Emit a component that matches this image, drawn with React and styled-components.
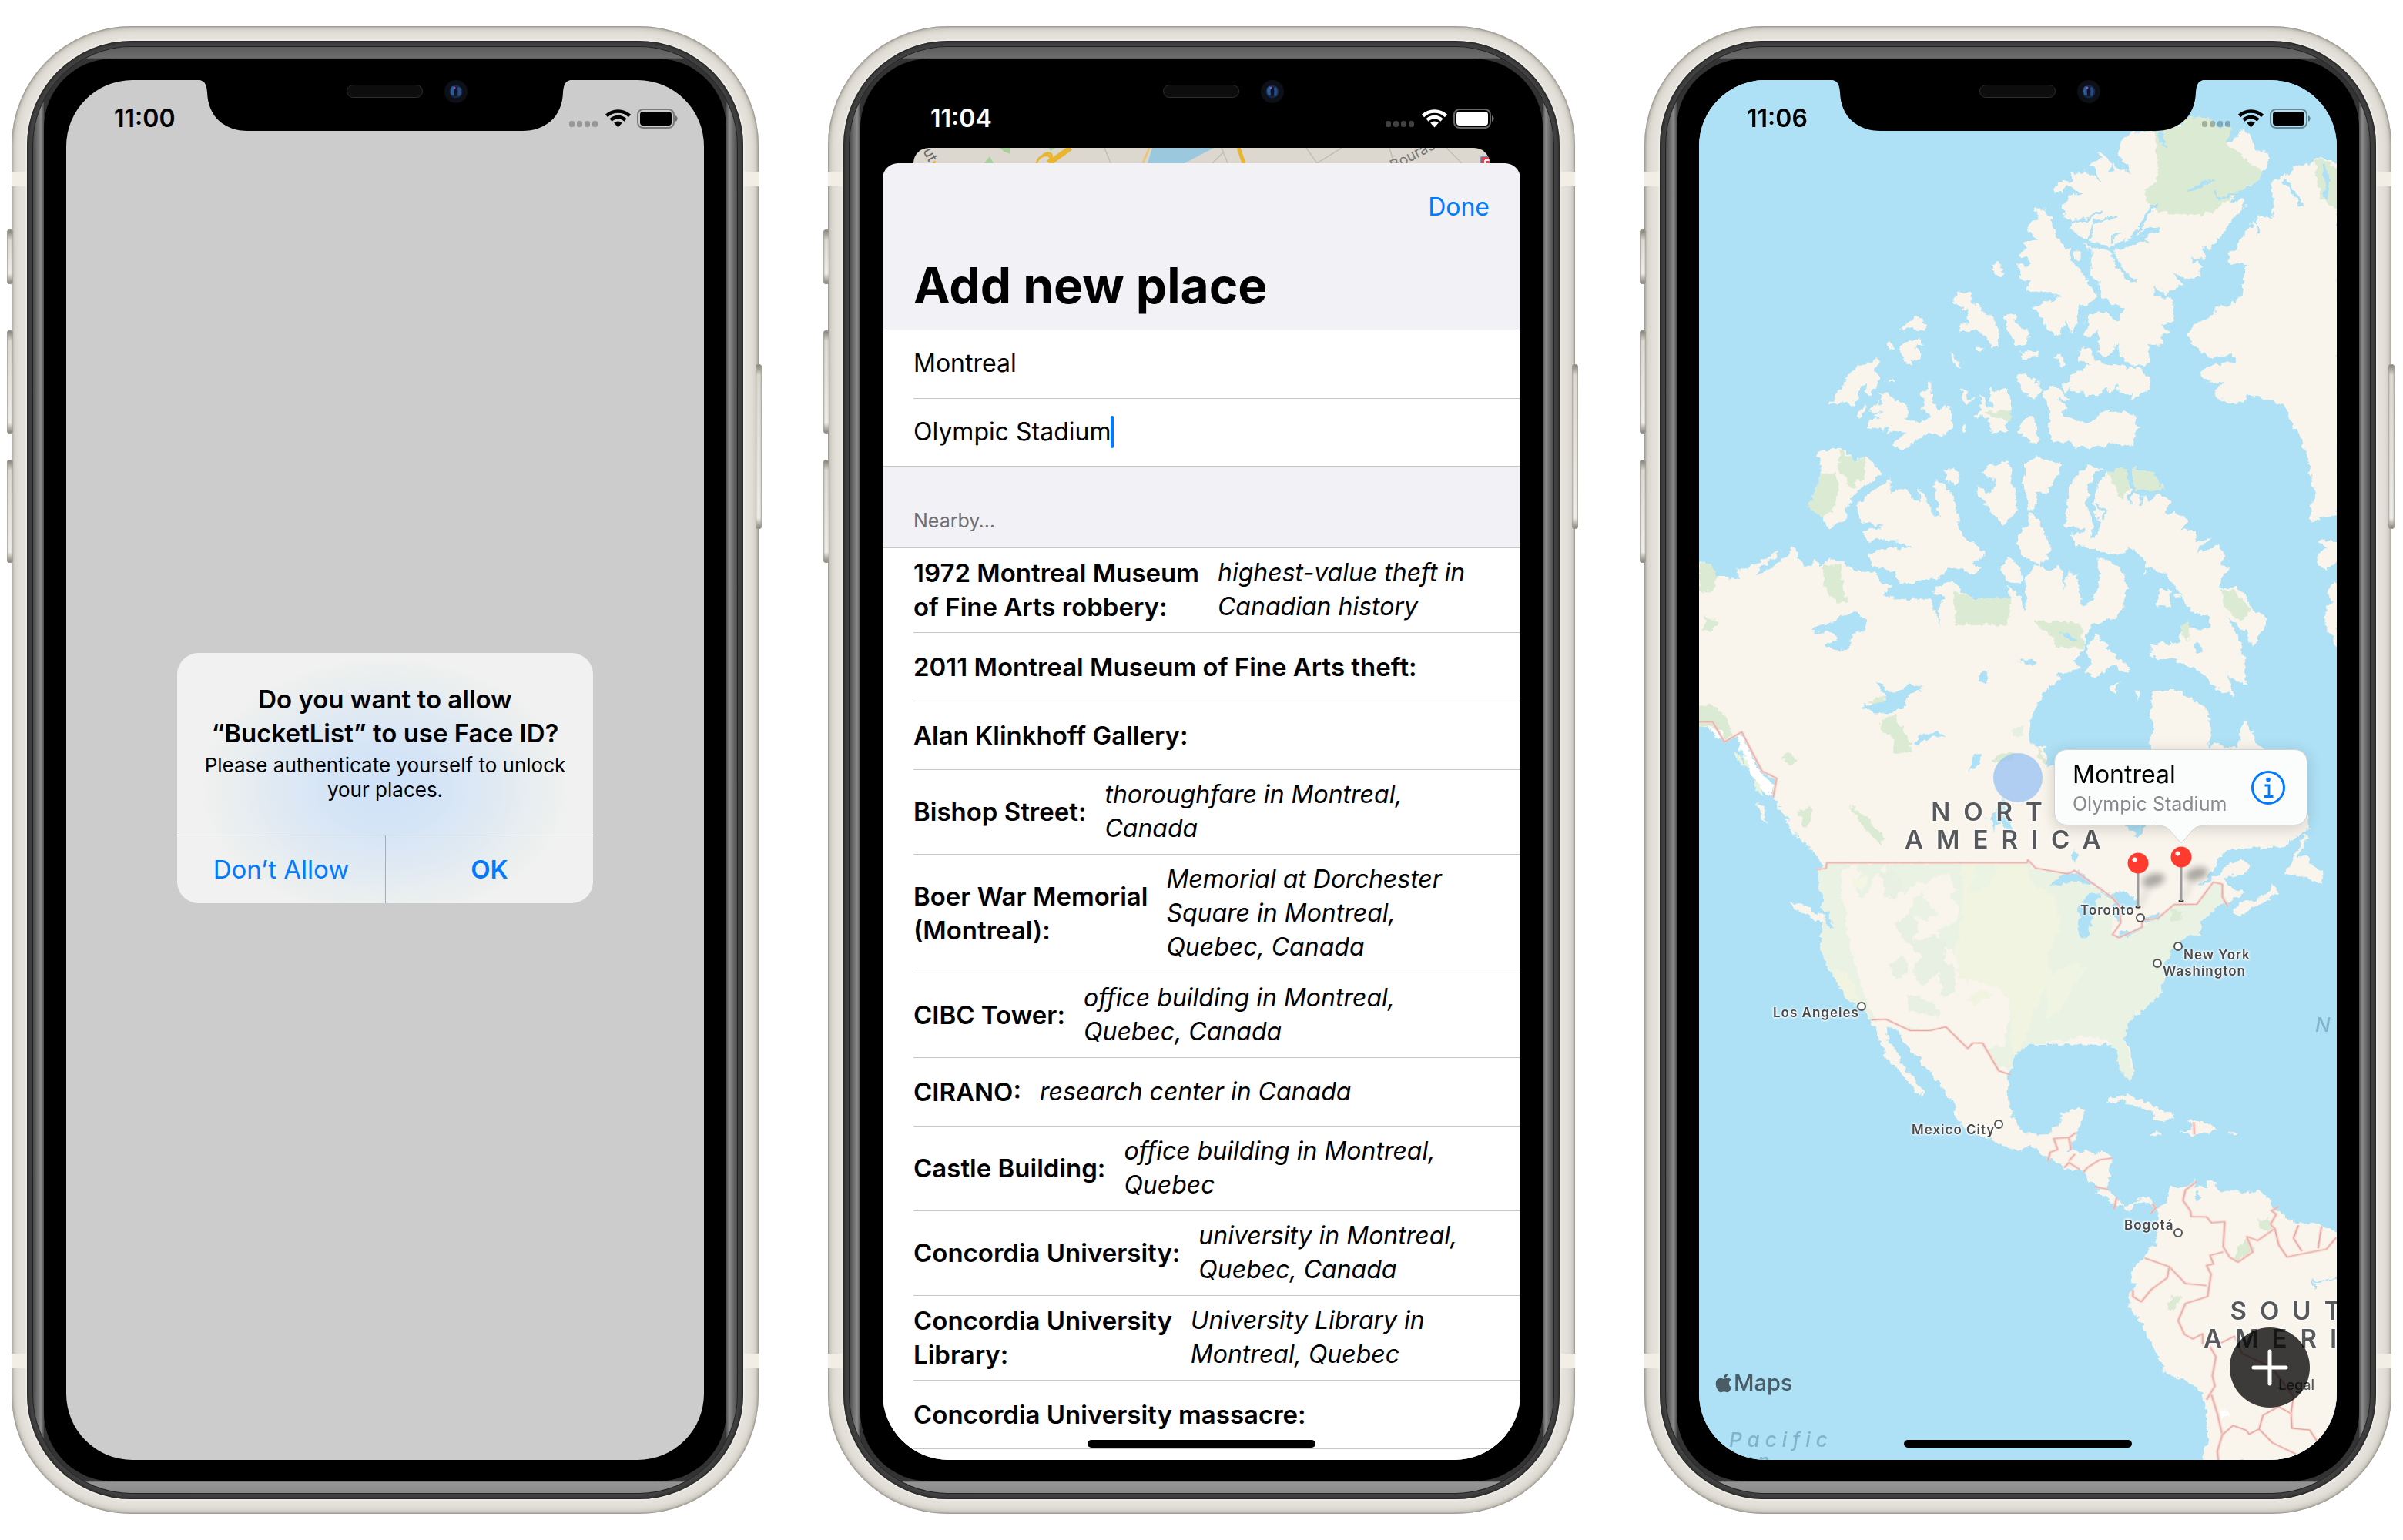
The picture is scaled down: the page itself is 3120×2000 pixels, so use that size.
import React from "react";
import styled, { createGlobalStyle, css } from "styled-components";
import { FaApple } from "react-icons/fa";

const BLUE = "#007aff";
const WATER = "#aee1f6";
const LAND = "#f9f5ed";
const PARK = "#dbead3";

const GlobalStyle = createGlobalStyle`
  * { box-sizing: border-box; }
  body {
    margin: 0;
    background: #fff;
    color: #000;
    font-family: Inter, "Liberation Sans", sans-serif;
  }
  button, input { font: inherit; }
`;

/* ---------- page and device ---------- */

const Page = styled.main`
  display: grid;
  grid-template-columns: repeat(3, minmax(0, 1fr));
  gap: 60px;
  padding: 34px 0;
`;

const Frame = styled.section`
  position: relative;
  margin: 0 15px;
  padding: 19px 20px;
  border-radius: 155px;
  background: #e6e3dc;
  box-shadow:
    inset 0 0 3px 1px #8f8c84,
    inset 0 0 9px 3px #bdb9b0,
    inset 0 0 16px 14px #e2dfd8;
`;

const Rim = styled.div`
  position: relative;
  padding: 8px;
  border-radius: 136px;
  background: #404040;
  box-shadow: 0 0 3px 1px #f7f6f2, inset 0 0 3px 1px #1c1c1c;
`;

const Bevel = styled.div`
  padding: 15px 14px;
  border-radius: 128px;
  background: linear-gradient(90deg, #4a4a4a 0, #8c8c8c 10px, #4c4c4c 14px, transparent 14px, transparent calc(100% - 14px), #4c4c4c calc(100% - 14px), #8c8c8c calc(100% - 10px), #4a4a4a 100%),
    linear-gradient(180deg, #5c5c5c 0, #6c6c6c 14px, #333 16px, #333 calc(100% - 16px), #959595 calc(100% - 14px), #8a8a8a 100%);
  box-shadow: 0 0 0 1px #222;
`;

const Glass = styled.div`
  padding: 28px 29px;
  border-radius: 90px;
  background: #000;
`;

const Screen = styled.div`
  position: relative;
  display: flex;
  flex-direction: column;
  aspect-ratio: 828 / 1792;
  overflow: hidden;
  border-radius: 86px;
  background: ${(p) => p.$background};
`;

const SideKey = styled.span`
  position: absolute;
  ${(p) => (p.$side === "left" ? "left: -6px;" : "right: -4px;")}
  top: ${(p) => p.$top}px;
  width: 8px;
  height: ${(p) => p.$length}px;
  border-radius: 4px;
  background: linear-gradient(180deg, #7d7a70, #dcd9d1 14px, #efede8 calc(100% - 14px), #7d7a70);
  box-shadow: inset 0 0 2px 1px #a19e94;
`;

const Antenna = styled.span`
  position: absolute;
  ${(p) => p.$side}: 0;
  ${(p) => p.$edge}: 189px;
  width: 19px;
  height: 19px;
  background: #f2eee5;
`;

const Notch = styled.svg`
  position: absolute;
  inset: 0 0 auto;
  width: 100%;
  z-index: 3;
`;

const StatusBar = styled.header`
  position: relative;
  z-index: 2;
  display: flex;
  align-items: center;
  justify-content: space-between;
  height: 88px;
  padding: 12px 34px 0 62px;
  color: ${(p) => p.$color};
`;

const Clock = styled.time`
  font-size: 32px;
  font-weight: 600;
  line-height: 36px;
`;

const StatusIcons = styled.svg`
  width: 141px;
  height: 26px;
`;

const HomeBar = styled.span`
  position: absolute;
  z-index: 4;
  bottom: 16px;
  left: 50%;
  width: 296px;
  height: 10px;
  margin-left: -148px;
  border-radius: 5px;
  background: #000;
`;

function Status({ time, color }) {
  return (
    <StatusBar $color={color}>
      <Clock>{time}</Clock>
      <StatusIcons viewBox="0 0 141 26" aria-hidden="true" fill="currentColor">
        <g opacity="0.26">
          <rect x="0" y="16" width="7" height="8" rx="3" />
          <rect x="10" y="16" width="7" height="8" rx="3" />
          <rect x="20" y="16" width="7" height="8" rx="3" />
          <rect x="30" y="16" width="7" height="8" rx="3" />
        </g>
        <g fill="none" stroke="currentColor" strokeWidth="4.6">
          <path d="M48.5 9.5 C56.500 1.500 70.500 1.500 78.500 9.500" />
          <path d="M54 15 C59.500 9.800 67.500 9.800 73 15" />
        </g>
        <path d="M58.200 18.500 C61.500 15.700 65.500 15.700 68.800 18.500 L63.500 24.500 Z" />
        <rect x="89" y="1" width="47" height="24" rx="7" fill="none" stroke="currentColor" strokeOpacity="0.4" strokeWidth="2" />
        <rect x="92" y="4" width="41" height="18" rx="4" />
        <path d="M138 9 C141.500 10.500 141.500 15.500 138 17 Z" opacity="0.45" />
      </StatusIcons>
    </StatusBar>
  );
}

function Phone({ label, time, background, ink = "#000", children }) {
  return (
    <Frame aria-label={label}>
      <SideKey $side="left" $top={264} $length={71} />
      <SideKey $side="left" $top={395} $length={134} />
      <SideKey $side="left" $top={563} $length={134} />
      <SideKey $side="right" $top={439} $length={214} />
      <Antenna $side="left" $edge="top" />
      <Antenna $side="right" $edge="top" />
      <Antenna $side="left" $edge="bottom" />
      <Antenna $side="right" $edge="bottom" />
      <Rim>
        <Bevel>
          <Glass>
            <Screen $background={background}>
              <Notch viewBox="0 0 828 70" aria-hidden="true">
                <path d="M168 -1 C180 0 182 5 183 16 C184 48 206 66 236 66 H592 C622 66 644 48 645 16 C646 5 648 0 660 -1 Z" fill="#000" />
                <rect x="364.500" y="6.500" width="98" height="16" rx="8" fill="#0d0d0d" stroke="#303030" />
                <circle cx="506" cy="15" r="15" fill="#0d1016" />
                <circle cx="506" cy="15" r="8.500" fill="#14284a" />
                <ellipse cx="502" cy="14" rx="3" ry="6" fill="#2c5c94" />
                <ellipse cx="510" cy="15" rx="2.500" ry="6" fill="#274b86" />
                <ellipse cx="506" cy="15" rx="2.500" ry="6" fill="#101327" />
                <circle cx="504" cy="10" r="1.500" fill="#8a5bc0" />
              </Notch>
              <Status time={time} color={ink} />
              {children}
              {label !== "Unlock" && <HomeBar />}
            </Screen>
          </Glass>
        </Bevel>
      </Rim>
    </Frame>
  );
}

/* ---------- face id alert ---------- */

const AlertArea = styled.div`
  flex: 1;
  display: flex;
  align-items: center;
  justify-content: center;
  padding-bottom: 68px;
`;

const Alert = styled.div`
  width: 540px;
  overflow: hidden;
  border-radius: 28px;
  background: radial-gradient(ellipse 240px 170px at 50% 54%, #cee2f8 0%, #d6e5f6 35%, #e3ebf2 68%, #ecefef 88%, #f0f1f0 100%);
`;

const AlertText = styled.div`
  padding: 38px 20px 42px;
  text-align: center;
`;

const AlertTitle = styled.h2`
  margin: 0 0 4px;
  font-size: 33px;
  font-weight: 600;
  line-height: 44px;
`;

const AlertMessage = styled.p`
  margin: 0;
  font-size: 26px;
  line-height: 32px;
`;

const AlertActions = styled.div`
  display: grid;
  grid-template-columns: 1fr 1fr;
  border-top: 1px solid #a9b1b8;
`;

const AlertButton = styled.button`
  height: 88px;
  border: 0;
  background: none;
  color: ${BLUE};
  font-size: 33px;
  font-weight: ${(p) => (p.$strong ? 600 : 400)};
  & + & { border-left: 1px solid #a3adb8; }
`;

/* ---------- add place sheet ---------- */

const Peek = styled.svg`
  display: block;
  flex: none;
  align-self: center;
  width: 748px;
  height: 20px;
  border-radius: 20px 20px 0 0;
`;

const Sheet = styled.div`
  flex: 1;
  min-height: 0;
  display: flex;
  flex-direction: column;
  border-radius: 20px 20px 0 0;
  background: #f2f1f6;
`;

const SheetBar = styled.div`
  flex: none;
  display: flex;
  justify-content: flex-end;
  align-items: center;
  height: 113px;
  padding: 0 40px;
`;

const TextButton = styled.button`
  padding: 0;
  border: 0;
  background: none;
  color: ${BLUE};
  font-size: 32px;
  line-height: 44px;
`;

const SheetTitle = styled.h1`
  flex: none;
  margin: 0;
  padding: 4px 40px 15px;
  border-bottom: 1px solid #c6c6c9;
  font-size: 64px;
  font-weight: 700;
  line-height: 84px;
`;

const Fields = styled.div`
  flex: none;
  padding-left: 40px;
  border-bottom: 1px solid #c6c6c9;
  background: #fff;
`;

const Field = styled.label`
  display: flex;
  align-items: center;
  height: 88px;
  padding-bottom: 2px;
  & + & { border-top: 1px solid #c8c7cc; }
`;

const FieldInput = styled.input`
  field-sizing: content;
  padding: 0;
  border: 0;
  outline: 0;
  background: none;
  font-size: 32px;
  line-height: 44px;
`;

const Caret = styled.span`
  width: 4px;
  height: 42px;
  border-radius: 2px;
  background: ${BLUE};
`;

const SectionHead = styled.h2`
  flex: none;
  margin: 0;
  padding: 54px 40px 18px;
  border-bottom: 1px solid #c6c6c9;
  color: #6d6d72;
  font-size: 25px;
  font-weight: 400;
  line-height: 33px;
`;

const PlaceList = styled.ul`
  flex: 1 0 auto;
  margin: 0;
  padding: 0 0 0 40px;
  list-style: none;
  background: #fff;
`;

const Place = styled.li`
  display: flex;
  align-items: center;
  gap: 24px;
  min-height: 89px;
  padding: 10px 0 11px;
  border-bottom: 1px solid #c8c7cc;
  font-size: 32px;
  line-height: 44px;
  white-space: pre;
`;

const PlaceName = styled.strong`
  font-size: 33px;
  font-weight: 600;
`;

const places = [
  ["1972 Montreal Museum\nof Fine Arts robbery:", "highest-value theft in\nCanadian history"],
  ["2011 Montreal Museum of Fine Arts theft:"],
  ["Alan Klinkhoff Gallery:"],
  ["Bishop Street:", "thoroughfare in Montreal,\nCanada"],
  ["Boer War Memorial\n(Montreal):", "Memorial at Dorchester\nSquare in Montreal,\nQuebec, Canada"],
  ["CIBC Tower:", "office building in Montreal,\nQuebec, Canada"],
  ["CIRANO:", "research center in Canada"],
  ["Castle Building:", "office building in Montreal,\nQuebec"],
  ["Concordia University:", "university in Montreal,\nQuebec, Canada"],
  ["Concordia University\nLibrary:", "University Library in\nMontreal, Quebec"],
  ["Concordia University massacre:"],
];

/* ---------- map ---------- */

const MapLayer = styled.div`
  position: absolute;
  inset: 0;
  overflow: hidden;
`;

const MapArt = styled.svg`
  display: block;
  width: 100%;
`;

const halo = css`
  text-shadow: 0 0 2px #fff, 0 0 3px #fff, 0 0 3px #fff, 0 0 4px #fff;
`;

const MapLabel = styled.span`
  position: absolute;
  left: ${(p) => p.$x}px;
  top: ${(p) => p.$y}px;
  white-space: pre;
`;

const City = styled(MapLabel)`
  color: #4a4a4a;
  font-size: 17px;
  font-weight: 600;
  line-height: 20px;
  letter-spacing: 1px;
  ${halo}
`;

const Continent = styled(MapLabel)`
  color: #58595a;
  font-size: 33px;
  font-weight: 600;
  line-height: 36px;
  letter-spacing: 17px;
  text-align: center;
  ${halo}
`;

const Ocean = styled(MapLabel)`
  color: #80b4cc;
  font-size: 26px;
  font-style: italic;
  font-weight: 500;
  line-height: 28px;
  letter-spacing: 7px;
`;

const MapsMark = styled(MapLabel)`
  display: flex;
  align-items: center;
  gap: 2px;
  color: #4a5c65;
  font-size: 29px;
  font-weight: 500;
  line-height: 36px;
  svg { width: 22px; height: 28px; }
`;

const Legal = styled.a`
  position: absolute;
  right: 29px;
  bottom: 86px;
  color: #55585a;
  font-size: 18px;
  font-weight: 500;
  line-height: 22px;
`;

const AddButton = styled.button`
  position: absolute;
  right: 35px;
  bottom: 68px;
  display: grid;
  place-items: center;
  width: 104px;
  height: 104px;
  padding: 0;
  border: 0;
  border-radius: 50%;
  background: rgba(0, 0, 0, 0.76);
`;

const Callout = styled.div`
  position: absolute;
  left: 461px;
  top: 869px;
  display: flex;
  align-items: center;
  gap: 27px;
  height: 99px;
  padding: 0 27px 0 23px;
  border: 1px solid #cfd3d4;
  border-radius: 16px;
  background: #fbfdfc;
  box-shadow: 0 4px 20px rgba(0, 0, 0, 0.16);
`;

const CalloutTail = styled.svg`
  position: absolute;
  left: 131px;
  top: 96px;
  width: 66px;
  height: 28px;
`;

const CalloutTitle = styled.div`
  font-size: 32px;
  line-height: 42px;
`;

const CalloutSubtitle = styled.div`
  min-width: 204px;
  color: #8a8a8e;
  font-size: 25px;
  line-height: 34px;
`;

const InfoButton = styled.button`
  width: 46px;
  height: 46px;
  padding: 0;
  border: 0;
  background: none;
  svg { display: block; }
`;

const cities = [
  { name: "Los Angeles", x: 96, y: 1201, cx: 211, cy: 1203 },
  { name: "Mexico City", x: 276, y: 1353, cx: 389, cy: 1356 },
  { name: "Bogotá", x: 552, y: 1477, cx: 622, cy: 1497 },
  { name: "Toronto", x: 495, y: 1068, cx: 573, cy: 1088 },
  { name: "New York", x: 629, y: 1126, cx: 622, cy: 1125 },
  { name: "Washington", x: 602, y: 1147, cx: 595, cy: 1147 },
];

const arctic = [
  // Ellesmere
  "1046,205 1020,240 1018,275 1035,300 1045,325 1020,310 1005,295 1010,322 990,322 1003,300 990,275 968,262 975,285 947,300 962,318 975,350 950,330 935,318 908,325 915,345 880,350 863,380 885,380 900,365 935,385 905,392 885,415 890,445 905,460 900,485 925,515 940,540 948,570 950,620 970,640 985,700 1000,715 1030,715 1020,755 995,740 975,725 940,745 935,795 950,800 965,780 975,800 970,850 985,862 1000,850 1015,815 1020,860 1045,883 1075,883 1090,860 1085,820 1120,825 1115,800 1137,785 1115,765 1143,755 1145,690 1100,680 1100,655 1125,675 1168,650 1145,615 1175,632 1203,628 1210,598 1185,572 1215,578 1212,535 1232,548 1255,500 1275,470 1308,420 1310,402 1275,405 1340,345 1352,318 1366,295 1362,262 1335,258 1320,210 1303,195 1300,212 1268,235 1250,232 1280,192 1245,188 1225,165 1200,162 1180,180 1190,225 1165,205 1160,175 1110,205",
  // Axel Heiberg
  "820,428 845,430 860,455 870,500 885,535 905,545 905,575 925,600 940,625 945,650 975,675 945,705 925,710 920,765 910,795 895,760 880,800 850,775 840,745 822,715 855,695 885,685 845,670 820,672 800,665 815,640 790,630 782,585 805,600 815,580 785,565 805,540 795,527 830,515 805,490 810,470 835,455",
  "915,548 926,552 928,575 920,580",
  "725,590 745,585 748,632 735,620 725,605",
  "635,685 650,673 672,675 680,710 695,705 710,735 728,745 740,800 738,830 720,828 710,795 685,780 650,785 648,768 672,760 665,725 650,712 637,705",
  "755,735 775,740 785,770 808,780 805,818 780,828 770,795 758,775",
  "510,780 530,760 550,740 568,755 570,780 550,782 540,772 520,785",
  "508,828 530,815 560,808 565,825 545,832 558,840 555,865 530,877 512,855",
  "478,820 490,818 498,835 490,840",
  "628,845 640,860 652,895 640,888",
  "688,830 708,832 700,845 688,842",
  "790,843 835,843 835,862 795,866",
  "872,858 885,852 895,885 882,888",
  "350,1000 360,965 378,955 390,915 415,880 440,880 455,862 467,880 455,895 460,930 445,970 432,965 435,935 415,955 410,985 395,1005 388,990 365,998",
  "408,1035 430,995 432,1010 420,1038",
  "482,930 495,925 500,935",
  "435,1060 445,1045 470,1040 450,1028 478,1022 440,1020 450,1000 470,990 465,970 485,962 500,990 525,995 530,1020 520,1035 545,1050 585,1040 575,1015 562,1010 570,985 558,970 570,960 575,932 583,935 585,985 600,1015 620,1000 633,1020 632,1060 620,1088 580,1085 555,1095 515,1130 490,1115 510,1095 530,1080 500,1075 475,1082 495,1058 460,1070",
  "652,950 670,960 668,972 682,985 660,995 655,975",
  "697,968 710,985 705,1000 725,1010 718,950 740,960 758,952 765,990 765,1015 745,1030 758,1045 760,1078 725,1083 722,1050 700,1030 682,1035 700,1015 697,990",
  "650,1060 660,1055 663,1078 650,1075",
  "800,1040 815,1035 830,1060 832,1108 815,1110 785,1080 790,1060",
  "782,912 800,908 835,935 835,970 820,978 795,960 785,935",
  "840,955 870,945 905,985 875,985 895,1005 885,1020 890,1035 920,1045 945,1050 985,1020 1020,1018 1055,1025 1062,1070 1050,1120 1015,1115 1000,1110 990,1120 925,1125 900,1100 890,1110 865,1105 855,1060 858,1020 850,990",
  "890,965 885,940 905,925 915,905 950,885 925,870 925,840 940,828 955,840 960,870 1000,880 1045,890 1070,890 1075,915 1090,920 1088,950 1045,985 1050,965 1020,968 1015,945 1000,962 985,950 970,975 935,965 905,960 905,945",
  // Greenland
  "1525,300 1500,285 1475,278 1462,295 1425,308 1398,335 1375,345 1365,370 1378,400 1372,455 1345,450 1332,455 1325,485 1300,510 1290,540 1270,560 1270,588 1300,590 1320,585 1308,600 1308,650 1290,700 1245,715 1240,735 1190,765 1178,795 1190,825 1225,862 1280,850 1285,870 1245,880 1210,895 1203,910 1230,925 1225,935 1260,935 1235,965 1275,1000 1310,985 1315,970 1375,985 1405,1010 1415,1050 1440,1100 1455,1160 1460,1215 1475,1260 1463,1290 1465,1340 1500,1325 1525,1325",
  "1525,1400 1485,1385 1478,1400 1500,1415 1475,1430 1478,1460 1495,1475 1525,1455",
  "1525,1510 1498,1540 1510,1570 1492,1600 1495,1640 1510,1680 1525,1710",
  // Banks and Victoria
  "320,1135 370,1122 390,1135 405,1165 430,1145 445,1160 470,1200 430,1235 405,1260 390,1290 385,1335 345,1362 330,1325 300,1300 315,1250 328,1195",
  "485,1215 492,1235 488,1262 510,1240 540,1258 540,1275 560,1280 552,1240 575,1270 590,1325 605,1325 592,1270 592,1215 615,1230 635,1265 645,1320 652,1375 690,1410 710,1435 690,1450 680,1465 695,1475 690,1492 625,1470 605,1500 545,1515 510,1520 500,1485 445,1465 438,1435 480,1415 535,1415 510,1395 435,1392 422,1370 470,1355 430,1340 410,1320 415,1285 440,1260",
  "615,1190 635,1183 648,1195 645,1220 635,1238 620,1215",
  "700,1200 715,1175 740,1170 762,1160 760,1172 775,1180 765,1220 780,1250 782,1310 750,1348 720,1310 700,1270 685,1245 690,1235 712,1258 735,1240 735,1215 710,1210",
  "800,1170 825,1152 885,1170 870,1210 858,1252 825,1255 832,1275 820,1300 808,1302 800,1240",
  "810,1310 830,1330 845,1370 862,1420 845,1455 830,1460 790,1430 785,1400 790,1358 808,1350",
  "745,1478 760,1445 780,1460 795,1490 790,1520 760,1510",
  // Baffin
  "975,1180 945,1175 915,1205 900,1245 893,1350 938,1360 938,1370 905,1378 920,1405 960,1420 1000,1432 1030,1430 1040,1410 1065,1435 1085,1470 1125,1490 1150,1530 1170,1570 1185,1605 1220,1610 1235,1640 1205,1655 1165,1650 1155,1690 1090,1695 1090,1730 1150,1740 1210,1780 1240,1825 1285,1845 1270,1790 1310,1815 1310,1740 1290,1665 1265,1610 1285,1635 1315,1660 1325,1700 1350,1655 1362,1620 1325,1590 1310,1545 1285,1530 1252,1530 1250,1500 1275,1475 1252,1470 1265,1440 1245,1410 1200,1430 1230,1385 1195,1400 1198,1360 1160,1365 1180,1340 1150,1310 1125,1320 1135,1275 1115,1258 1090,1275 1050,1255 1042,1235 995,1195 965,1240",
  "1045,1185 1100,1195 1120,1248 1080,1240 1055,1250",
  "1110,1534 1135,1539 1138,1584 1105,1584",
  "1070,1495 1082,1472 1078,1490",
  "1145,1550 1165,1555 1150,1562",
  "960,1664 985,1694 1005,1724 1025,1744 1045,1769 1025,1774 1000,1754 985,1774 975,1789 940,1779 955,1744 945,1714",
  "995,1824 1022,1806 1005,1835",
  "1055,1834 1068,1834 1060,1859",
  // Mainland
  "40,1455 70,1460 95,1495 140,1508 130,1478 160,1475 190,1455 235,1422 225,1440 190,1470 175,1498 205,1480 245,1445 262,1405 285,1460 305,1475 320,1440 325,1470 350,1445 385,1460 410,1480 455,1490 470,1520 495,1525 470,1550 510,1565 580,1560 605,1640 600,1575 620,1560 585,1550 600,1530 630,1505 640,1520 665,1555 710,1565 770,1560 755,1525 790,1550 800,1600 805,1560 800,1500 830,1460 860,1485 880,1460 890,1510 890,1540 905,1480 920,1500 935,1590 960,1560 975,1500 968,1450 990,1450 1025,1480 1035,1510 1030,1590 1010,1620 950,1640 940,1700 910,1745 930,1765 870,1785 880,1800 850,1830 830,1860 815,1920 812,1980 845,2000 850,2050 870,2050 950,2070 1000,2140 1035,2225 1060,2260 1080,2225 1070,2100 1095,2030 1085,1980 1100,1940 1090,1900 1095,1830 1160,1830 1225,1890 1230,1960 1225,1995 1245,1980 1265,1998 1290,1995 1310,1915 1340,1990 1420,2070 1455,2190 1455,2240 1420,2255 1405,2285 1280,2290 1255,2310 1240,2340 1205,2400 1225,2385 1275,2330 1300,2320 1320,2335 1315,2360 1260,2375 1270,2400 1310,2420 1250,2454 1205,2504 1210,2539 1165,2549 1140,2594 1120,2619 1125,2654 1115,2709 1090,2744 1050,2779 1030,2834 1000,2860 810,2860 770,2860 480,2800 425,2749 385,2729 355,2654 330,2594 330,2434 320,2354 340,2344 300,2284 265,2244 235,2194 220,2134 220,2084 190,2064 165,2004 145,1954 105,1979 85,1944 40,1934",
  // Newfoundland and Nova Scotia
  "1455,2249 1440,2264 1410,2344 1400,2364 1440,2369 1490,2389 1490,2354 1460,2334 1455,2309 1430,2314 1450,2274",
  "1290,2459 1310,2444 1360,2424 1370,2389 1385,2419 1350,2449 1320,2464 1300,2489 1285,2479",
];

const south = [
  // Mexico to Peru
  "445,-20 450,5 480,40 485,60 500,110 520,170 555,225 575,265 592,275 585,245 555,200 540,160 520,110 515,75 540,85 550,115 580,165 605,210 630,250 655,300 655,345 700,385 745,415 785,438 810,420 835,445 880,485 910,490 945,535 945,560 985,590 1015,615 1020,592 1045,582 1062,604 1070,605 1065,650 1065,700 1050,730 1030,755 1015,790 1015,820 1028,822 1005,860 1015,900 1035,935 1060,1010 1085,1080 1150,1125 1165,1165 1170,1260 1160,1340 1440,1340 1440,680 1400,650 1355,650 1330,625 1300,600 1300,580 1275,548 1255,560 1200,550 1185,535 1170,520 1165,540 1140,548 1148,515 1130,540 1095,545 1085,585 1068,605 1055,578 1040,570 1020,587 1000,600 985,575 965,550 970,500 975,445 930,438 880,435 900,400 905,380 912,350 922,318 905,312 875,325 870,360 840,385 810,390 790,375 770,320 763,280 765,220 770,160 800,130 880,115 910,95 950,110 975,115 990,145 995,190 1010,228 1020,215 1015,160 1000,100 1010,60 1060,-10",
  // Caribbean
  "962,298 975,280 1005,275 1040,290 1075,315 1105,340 1065,347 1060,330 1025,305 1000,290",
  "1125,348 1160,350 1190,375 1160,385 1140,388 1108,382 1140,375 1140,355",
  "1052,382 1065,380 1078,388 1062,391",
  "1212,382 1230,381 1228,388 1212,388",
];

const arcticParks = [
  "1103,203 1160,180 1175,165 1200,160 1225,165 1245,188 1280,190 1265,235 1290,262 1325,300 1352,318 1340,345 1310,370 1275,400 1240,430 1215,446 1150,445 1110,435 1085,415 1073,380 1107,345",
  "1470,280 1485,285 1500,290 1525,320 1525,435 1485,400 1478,350",
  "373,1128 400,1155 412,1162 430,1145 430,1215 408,1220 408,1240 390,1240 390,1210 367,1190",
  "328,1195 362,1202 370,1240 355,1310 330,1328 300,1300 315,1250",
  "706,1020 765,1015 765,1040 735,1042",
  "995,1200 1010,1185 1035,1190 1042,1235 1025,1270 1010,1250",
  "1045,1185 1100,1195 1120,1248 1080,1240 1055,1250",
  "46,1459 70,1460 93,1492 82,1509 80,1544 46,1539",
  "335,1464 375,1464 380,1549 393,1572 365,1574 332,1524",
  "60,1609 88,1629 82,1656 56,1656",
  "633,1534 665,1555 690,1562 772,1560 758,1639 642,1639",
  "823,1632 870,1627 930,1632 938,1704 873,1704 865,1674",
  "1255,1534 1280,1539 1325,1594 1300,1629 1260,1584",
  "1180,1624 1155,1644 1178,1689",
  "40,1879 80,1874 115,1914 120,1964 105,1975 78,1934 40,1939",
  "440,1864 460,1847 478,1854 455,1879",
  "467,1909 500,1904 520,1944 540,2009 494,2012 494,1956 467,1949",
  "235,2024 255,2014 275,2034 258,2049",
  "275,2184 308,2169 300,2234 288,2224",
  "393,2164 425,2189 475,2254 465,2279 430,2234",
  "720,2039 740,2009 775,2014 770,2034",
  "830,1989 850,2044 828,2024",
  "1135,2464 1165,2469 1160,2504 1138,2499",
];

const southParks = [
  "1087,880 1100,862 1120,860 1110,880 1095,902",
  "1250,690 1265,725 1235,757 1218,750 1232,715",
  "1272,635 1290,635 1305,668 1285,670 1275,655",
];

const lakes = [
  "308,1644 350,1634 375,1609 405,1602 435,1624 430,1654 400,1669 400,1690 378,1714 340,1699 370,1674 350,1659 318,1662",
  "422,1869 440,1876 462,1866 478,1859 470,1835 455,1804 500,1842 530,1816 567,1816 530,1844 515,1884 480,1896 440,1889",
  "540,1984 560,1959 600,1949 617,1961 575,1969 550,1989",
  "690,1799 700,1779 715,1776 712,1814",
  "672,2064 680,2019 702,2016 688,2060",
  "785,1744 800,1740 830,1747 815,1754",
  "705,2194 720,2199 750,2144 765,2204 778,2254 755,2229 745,2214 730,2234 725,2206",
  "855,2399 890,2364 920,2354 985,2414 950,2392 900,2389",
  "925,2459 945,2424 975,2419 960,2454 950,2534 935,2549 925,2524",
  "975,2419 1030,2414 1065,2449 1030,2474 1020,2504 1005,2474 1000,2429",
  "1005,2544 1072,2514 1065,2529 1020,2552",
  "1075,2494 1110,2474 1115,2494 1080,2504",
  "910,2289 925,2304 918,2334 908,2319",
  "882,1660 905,1665 925,1690 905,1685",
];

const channels = [
  ["880,440 905,500 950,530 1000,545 1050,525 1085,492 1113,488", 16],
  ["1107,412 1080,445 1070,480 1045,515", 9],
  ["1000,545 1015,590 1040,635 1058,640", 9],
  ["945,520 965,465 1013,452", 8],
  ["885,468 940,462 978,434", 8],
  ["1000,530 1005,505 1025,495", 6],
  ["1045,520 1088,525", 7],
  ["950,545 948,600 945,650", 9],
  ["960,640 975,690 1000,712 1030,718", 9],
  ["1175,378 1205,360 1238,342", 9],
  ["1235,378 1250,398 1290,385 1320,368", 7],
  ["1112,205 1118,235 1130,245", 7],
  ["935,800 945,745 975,700", 7],
  ["1400,345 1420,375 1442,420", 8],
  ["1332,455 1340,500", 5],
  ["1492,300 1500,340 1494,398", 9],
  ["978,1185 957,1230 952,1290 966,1350 960,1385", 14],
  ["965,1290 985,1310 978,1330", 7],
  ["1042,1190 1050,1250 1040,1280", 7],
  ["1070,1255 1068,1290", 5],
  ["1180,1640 1230,1640", 12],
  ["1195,1690 1205,1720", 14],
];

const northBorders = [
  "40,1921 78,1921 105,1979 145,1950 192,2064 226,2085 218,2140",
  "318,2350 340,2347 342,2331 805,2331 807,2322 825,2346 900,2363 915,2353 1000,2429 1018,2455 1022,2505 1003,2540 1018,2548 1072,2518 1070,2498 1108,2492 1145,2452 1198,2451 1236,2387 1257,2393 1257,2430 1270,2458",
];

const southBorders = [
  "485,55 515,53 565,86 605,86 637,75 682,138 692,122 712,122 745,203 770,215",
  "845,465 850,440 865,432 857,400 888,397 892,435",
  "888,397 902,383",
  "878,485 888,470 910,490",
  "888,465 900,445",
  "918,498 925,485 950,462 977,457",
  "940,540 968,548",
  "980,605 985,572",
  "1055,617 1065,602 1057,590",
  "1148,525 1125,550 1120,580 1135,610 1137,627 1168,628 1178,645 1205,642 1202,715 1215,745 1232,760 1262,730 1250,685 1272,697 1307,662 1298,650 1310,620 1300,610 1315,598",
  "1307,662 1315,710 1332,745 1365,735 1412,722 1432,688",
  "1355,652 1345,690 1362,728",
  "1402,655 1395,720",
  "1202,730 1175,740 1182,765 1168,770 1177,795 1170,860 1125,880 1110,930 1123,970 1140,983 1160,968 1160,1000",
  "1168,828 1125,822 1092,773 1042,748",
  "1092,773 1088,805 1055,840 1035,875 1018,860 1018,840",
  "1175,1005 1187,1035 1180,1090 1185,1120 1168,1160",
  "1178,1145 1190,1200 1200,1262 1190,1310 1192,1335",
  "1200,1262 1222,1235 1248,1248 1255,1260 1275,1245 1302,1285 1350,1318",
  "1275,1245 1283,1205 1315,1180 1340,1200 1342,1243 1378,1248 1395,1285",
  "1190,1000 1225,975 1240,1025 1300,1065 1345,1150 1340,1200",
  "1142,352 1143,388",
];

const US = "342,2331 805,2331 825,2346 900,2363 985,2420 1000,2440 1005,2540 1072,2518 1145,2452 1198,2451 1236,2387 1257,2393 1270,2440 1250,2454 1205,2504 1210,2539 1165,2549 1140,2594 1120,2619 1125,2654 1115,2709 1090,2744 1050,2779 1030,2834 1045,2920 1052,2950 1040,2960 1020,2930 1010,2880 990,2845 930,2835 890,2850 810,2860 775,2890 770,2930 740,2925 700,2855 680,2855 668,2870 615,2808 580,2818 535,2818 480,2787 440,2787 425,2749 385,2729 355,2654 330,2594 330,2434 320,2354";

const terrain = [
  ["655,2331 805,2331 815,2390 870,2430 880,2520 850,2600 870,2690 800,2700 780,2740 700,2720 650,2690 640,2600 655,2480", "#f1f4e1"],
  ["690,2335 740,2335 720,2400 670,2420", "#ebf4e3"],
  ["378,2345 412,2338 418,2365 400,2400 420,2430 440,2420 450,2375 470,2350 480,2335 495,2400 520,2420 555,2385 580,2400 545,2430 530,2480 560,2500 600,2480 570,2440 560,2400 600,2370 625,2360 640,2410 625,2430 650,2460 640,2510 600,2520 600,2560 640,2590 648,2670 700,2680 745,2700 765,2740 755,2860 690,2880 610,2820 460,2800 430,2720 405,2620 385,2510 390,2470 375,2430", LAND],
  ["400,2380 440,2370 425,2410 405,2405", "#f5f5e4"],
  ["460,2360 490,2350 520,2400 500,2440 470,2430 480,2400", "#e7f0e3"],
  ["500,2510 530,2480 560,2510 540,2560 580,2540 620,2560 610,2610 640,2640 640,2700 610,2720 600,2650 560,2690 540,2640 560,2600 525,2560", "#e7f0e3"],
  ["485,2630 520,2600 530,2650 500,2670", "#e7f0e3"],
  ["525,2710 560,2720 600,2755 600,2780 530,2760", "#e7f0e3"],
  ["360,2640 385,2650 405,2690 412,2730 385,2720 365,2690", "#f1f4e0"],
  ["660,2730 700,2700 730,2715 690,2740", "#f1f4e1"],
  ["765,2740 800,2700 850,2690 820,2760 800,2850 775,2890 770,2850", "#f1f4e1"],
  ["850,2660 920,2620 940,2640 880,2760 850,2790", "#f0f4e2"],
];

const glaciers = [
  "14,842 28,844 34,858 22,852",
  "54,848 66,872 76,896 98,916 94,930 84,924 70,904 58,880 50,856",
];

const panhandle = [
  "46,872 54,876 60,892 52,888",
  "56,878 64,884 64,894",
  "70,908 80,916 84,930 76,926",
];

const coastIslands = [
  "118,1067 140,1073 160,1086 163,1093 150,1090 130,1080",
  "75,939 84,941 83,952 90,966 84,960 78,950",
];

const NORTH_PROJECTION = "matrix(0.56122 0 0 0.44643 -26 -24)";
const SOUTH_PROJECTION = "matrix(0.63776 0 0 0.44643 -86 1196)";

const Shapes = ({ items, fill }) => items.map((points) => <polygon key={points} points={points} fill={fill} />);

const Borders = ({ items }) =>
  items.map((points) => (
    <g key={points} fill="none" strokeLinejoin="round">
      <polyline points={points} stroke="#f6d5cf" strokeWidth="7" opacity="0.8" />
      <polyline points={points} stroke="#e6a79f" strokeWidth="2.500" />
    </g>
  ));

function Pin({ x, y }) {
  return (
    <g transform={`translate(${x} ${y})`}>
      <ellipse cx="20" cy="22" rx="15" ry="8" fill="#000" opacity="0.32" filter="url(#soft)" transform="rotate(-16 20 22)" />
      <path d="M2 56 L14 30" stroke="#000" strokeOpacity="0.12" strokeWidth="5" filter="url(#soft)" />
      <ellipse cx="0" cy="57" rx="3.500" ry="1.500" fill="#333" />
      <rect x="-1.500" y="12" width="3" height="45" fill="#9a9c9e" />
      <circle r="13.500" fill="#ff3b30" />
      <circle cx="-4.500" cy="-4.500" r="3" fill="#fff" />
    </g>
  );
}

function MapCanvas() {
  return (
    <MapArt viewBox="0 0 828 1792" aria-hidden="true">
      <defs>
        <filter id="coast" x="-20" y="-20" width="868" height="1832" filterUnits="userSpaceOnUse">
          <feTurbulence type="fractalNoise" baseFrequency="0.11" numOctaves="3" seed="4" result="noise" />
          <feDisplacementMap in="SourceGraphic" in2="noise" scale="11" xChannelSelector="R" yChannelSelector="G" />
        </filter>
        <filter id="soft" x="-50%" y="-50%" width="200%" height="200%">
          <feGaussianBlur stdDeviation="4" />
        </filter>
        <clipPath id="us"><polygon points={US} /></clipPath>
      </defs>
      <rect width="828" height="1792" fill={WATER} />
      <g filter="url(#coast)">
        <g transform={SOUTH_PROJECTION}><Shapes items={south} fill={LAND} /></g>
        <g transform={NORTH_PROJECTION}>
          <Shapes items={arctic} fill={LAND} />
          <g clipPath="url(#us)">
            <polygon points={US} fill="#eaf2e4" />
            {terrain.map(([points, fill]) => <polygon key={points} points={points} fill={fill} />)}
          </g>
          <Shapes items={arcticParks} fill={PARK} />
          <polygon points="765,1944 795,1932 795,1964 770,1959" fill="#e6efe2" />
          <Shapes items={lakes} fill={WATER} />
          {channels.map(([points, width]) => (
            <polyline key={points} points={points} fill="none" stroke={WATER} strokeWidth={width} strokeLinejoin="round" />
          ))}
        </g>
        <polyline points="120,1058 148,1070 166,1084 172,1102" fill="none" stroke={WATER} strokeWidth="6" />
        <polyline points="104,946 110,958 118,960" fill="none" stroke={WATER} strokeWidth="4" />
        <Shapes items={glaciers} fill="#fff" />
        <Shapes items={panhandle} fill="#e9f3e2" />
        <Shapes items={coastIslands} fill={LAND} />
        <g transform={SOUTH_PROJECTION}>
          <Shapes items={southParks} fill={PARK} />
          <polygon points="1142,565 1150,552 1156,570 1148,582" fill={WATER} />
          <polygon points="1196,1190 1212,1188 1214,1208 1198,1212" fill="#fff" />
          <polyline points="1440,802 1400,818 1385,812 1388,840" fill="none" stroke={WATER} strokeWidth="5" />
        </g>
      </g>
      <g transform={NORTH_PROJECTION}><Borders items={northBorders} /></g>
      <g transform={SOUTH_PROJECTION}><Borders items={southBorders} /></g>
      {cities.map((c) => (
        <circle key={c.name} cx={c.cx} cy={c.cy} r="5" fill="#fff" stroke="#55564f" strokeWidth="2" />
      ))}
    </MapArt>
  );
}

const PinLayer = styled.svg`
  position: absolute;
  inset: 0;
  width: 100%;
`;

/* ---------- screens ---------- */

function UnlockScreen() {
  return (
    <Phone label="Unlock" time="11:00" background="#cccccc">
      <AlertArea>
        <Alert role="alertdialog" aria-labelledby="alert-title">
          <AlertText>
            <AlertTitle id="alert-title">Do you want to allow<br />“BucketList” to use Face ID?</AlertTitle>
            <AlertMessage>Please authenticate yourself to unlock<br />your places.</AlertMessage>
          </AlertText>
          <AlertActions>
            <AlertButton type="button">Don’t Allow</AlertButton>
            <AlertButton type="button" $strong>OK</AlertButton>
          </AlertActions>
        </Alert>
      </AlertArea>
    </Phone>
  );
}

function AddPlaceScreen() {
  return (
    <Phone label="Add place" time="11:04" background="#000" ink="#fff">
      <Peek viewBox="0 0 748 20" aria-hidden="true">
        <rect width="748" height="20" fill="#dcd8cf" />
        <path d="M112 0 H126 V8 L118 5 Z M92 20 L99 11 L104 20 Z M176 0 H184 L178 4 Z" fill="#a9cf9c" />
        <path d="M310 0 H390 L352 20 H304 Z" fill="#9bc8dd" />
        <g fill="none" stroke="#c2bfb8" strokeWidth="1.500">
          <path d="M248 0 L256 20 M400 0 L408 20 M388 20 L402 6 M510 0 L524 20 L556 0 M618 0 L624 20 M692 0 L712 20" />
        </g>
        <path d="M204 0 L176 20" stroke="#e9b52f" strokeWidth="7" />
        <path d="M160 20 C162 8 180 6 178 16 M168 10 C176 2 186 10 174 18" stroke="#e9b52f" strokeWidth="3" fill="none" />
        <path d="M306 0 C304 8 300 12 298 20" stroke="#e8c77e" strokeWidth="3" fill="none" />
        <path d="M422 0 L429 20" stroke="#e9b52f" strokeWidth="5" />
        <path d="M26 18 L28 20" stroke="#e9b52f" strokeWidth="4" />
        <text x="12" y="4" fontSize="19" fill="#666" transform="rotate(62 12 4)">ut</text>
        <text x="623" y="30" fontSize="19" fill="#777" transform="rotate(-28 623 30)">Bouras</text>
        <rect x="736" y="11" width="20" height="14" rx="4" fill="#e0444c" stroke="#7f8fb5" strokeWidth="2" />
        <path d="M742 16 H748 M742 16 V20" stroke="#fff" strokeWidth="2" />
      </Peek>
      <Sheet>
        <SheetBar><TextButton type="button">Done</TextButton></SheetBar>
        <SheetTitle>Add new place</SheetTitle>
        <Fields>
          <Field><FieldInput aria-label="Place name" defaultValue="Montreal" /></Field>
          <Field><FieldInput aria-label="Description" defaultValue="Olympic Stadium" /><Caret /></Field>
        </Fields>
        <SectionHead>Nearby…</SectionHead>
        <PlaceList>
          {places.map(([name, note]) => (
            <Place key={name}>
              <PlaceName>{name}</PlaceName>
              {note && <em>{note}</em>}
            </Place>
          ))}
        </PlaceList>
      </Sheet>
    </Phone>
  );
}

function MapScreen() {
  return (
    <Phone label="Map" time="11:06" background={WATER}>
      <MapLayer>
        <MapCanvas />
        {cities.map((c) => <City key={c.name} $x={c.x} $y={c.y}>{c.name}</City>)}
        <Continent $x={267} $y={932}>{"NORTH\nAMERICA"}</Continent>
        <Continent $x={655} $y={1580}>{"SOUTH\nAMERICA"}</Continent>
        <Ocean $x={800} $y={1213}>North</Ocean>
        <Ocean $x={39} $y={1752}>Pacific</Ocean>
        <Ocean $x={-18} $y={1780}>Ocean</Ocean>
        <MapsMark $x={21} $y={1674}><FaApple />Maps</MapsMark>
        <PinLayer viewBox="0 0 828 1792" aria-hidden="true">
          <circle cx="414" cy="906" r="32" fill="#9cc4f2" fillOpacity="0.8" />
          <Pin x={570} y={1017} />
        </PinLayer>
        <Callout>
          <CalloutTail viewBox="0 0 66 28" aria-hidden="true">
            <path d="M0 2 C16 2 18 8 24 15 L30 22 Q33 26 36 22 L42 15 C48 8 50 2 66 2" fill="#fbfdfc" stroke="#cfd3d4" />
            <rect y="0" width="66" height="2" fill="#fbfdfc" />
          </CalloutTail>
          <div>
            <CalloutTitle>Montreal</CalloutTitle>
            <CalloutSubtitle>Olympic Stadium</CalloutSubtitle>
          </div>
          <InfoButton type="button" aria-label="Place details">
            <svg viewBox="0 0 46 46" fill="none" stroke={BLUE}>
              <circle cx="23" cy="23" r="20.500" strokeWidth="3" />
              <circle cx="23" cy="12.500" r="2.800" fill={BLUE} stroke="none" />
              <path d="M18.500 20 H24 V34 M17.500 34.500 H29.500" strokeWidth="2.800" />
            </svg>
          </InfoButton>
        </Callout>
        <PinLayer viewBox="0 0 828 1792" aria-hidden="true" pointerEvents="none">
          <Pin x={626} y={1009} />
        </PinLayer>
        <Legal href="#legal">Legal</Legal>
        <AddButton type="button" aria-label="Add place">
          <svg width="48" height="48" viewBox="0 0 48 48" aria-hidden="true" stroke="#fff" strokeWidth="5" strokeLinecap="round">
            <path d="M24 3 V45 M3 24 H45" />
          </svg>
        </AddButton>
      </MapLayer>
    </Phone>
  );
}

export default function App() {
  return (
    <>
      <GlobalStyle />
      <Page>
        <UnlockScreen />
        <AddPlaceScreen />
        <MapScreen />
      </Page>
    </>
  );
}
